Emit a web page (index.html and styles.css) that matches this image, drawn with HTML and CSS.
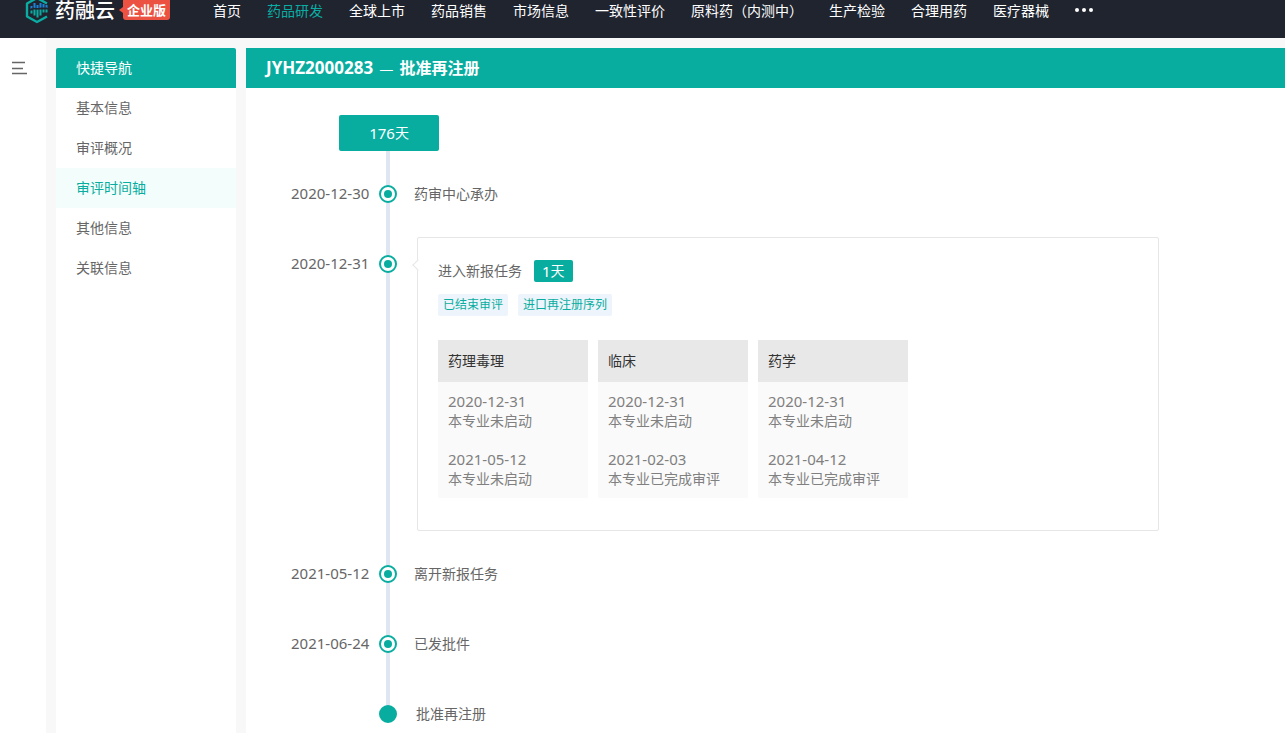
FILE: index.html
```html
<!DOCTYPE html>
<html lang="zh-CN">
<head>
<meta charset="utf-8">
<title>药融云</title>
<link rel="stylesheet" href="styles.css">
</head>
<body>
<header class="topbar">
  <a class="brand" href="#">
    <svg class="brand-mark" viewBox="0 0 24 24" aria-hidden="true">
      <path d="M22 3.500 12 -2 2 3.500V16.500L12 22 22 16.500" fill="none" stroke="#0bada3" stroke-width="2.400" stroke-linejoin="round"/>
      <path d="M6.500 6v3M9.500 3v5M12.500 5v3M15.500 3v5M18.500 4v4M21.500 5v3" stroke="#1c84d8" stroke-width="2"/>
      <path d="M6.500 10.500v3M9.500 9.500v6M12.500 9.500v8M15.500 9.500v6M18.500 9.500v3M21.500 9.500v3" stroke="#0bada3" stroke-width="2"/>
      <path d="M5 9.500 8 8l4 1 4-1h6" fill="none" stroke="#20242f"/>
    </svg>
    <span class="brand-name">药融云</span>
    <span class="brand-badge">企业版</span>
  </a>
  <nav class="main-nav">
    <a href="#">首页</a>
    <a class="active" href="#">药品研发</a>
    <a href="#">全球上市</a>
    <a href="#">药品销售</a>
    <a href="#">市场信息</a>
    <a href="#">一致性评价</a>
    <a href="#">原料药（内测中）</a>
    <a href="#">生产检验</a>
    <a href="#">合理用药</a>
    <a href="#">医疗器械</a>
    <button class="more" type="button" aria-label="更多"><i></i><i></i><i></i></button>
  </nav>
</header>
<div class="shell">
  <div class="rail">
    <button class="menu-toggle" type="button" aria-label="展开菜单">
      <svg viewBox="0 0 16 14" aria-hidden="true"><path d="M0 1.500h13M0 7.500h11M0 12.500h15" stroke="#666" stroke-width="1.300"/></svg>
    </button>
  </div>
  <aside class="side-nav">
    <h2>快捷导航</h2>
    <a href="#">基本信息</a>
    <a href="#">审评概况</a>
    <a class="active" href="#">审评时间轴</a>
    <a href="#">其他信息</a>
    <a href="#">关联信息</a>
  </aside>
  <main class="panel">
    <h1><span class="code">JYHZ2000283</span><span class="dash">—</span>批准再注册</h1>
    <div class="timeline">
      <div class="total"><span class="num">176</span>天</div>
      <ol class="events">
        <li><time>2020-12-30</time><span class="dot"></span><p>药审中心承办</p></li>
        <li>
          <time>2020-12-31</time><span class="dot"></span>
          <section class="card">
            <div class="card-title">进入新报任务 <span class="days"><span class="num">1</span>天</span></div>
            <div class="tags"><span>已结束审评</span><span>进口再注册序列</span></div>
            <div class="subjects">
              <article>
                <h3>药理毒理</h3>
                <div class="steps">
                  <div><time>2020-12-31</time><p>本专业未启动</p></div>
                  <div><time>2021-05-12</time><p>本专业未启动</p></div>
                </div>
              </article>
              <article>
                <h3>临床</h3>
                <div class="steps">
                  <div><time>2020-12-31</time><p>本专业未启动</p></div>
                  <div><time>2021-02-03</time><p>本专业已完成审评</p></div>
                </div>
              </article>
              <article>
                <h3>药学</h3>
                <div class="steps">
                  <div><time>2020-12-31</time><p>本专业未启动</p></div>
                  <div><time>2021-04-12</time><p>本专业已完成审评</p></div>
                </div>
              </article>
            </div>
          </section>
        </li>
        <li><time>2021-05-12</time><span class="dot"></span><p>离开新报任务</p></li>
        <li><time>2021-06-24</time><span class="dot"></span><p>已发批件</p></li>
        <li class="last"><time></time><span class="dot"></span><p>批准再注册</p></li>
      </ol>
    </div>
  </main>
</div>
</body>
</html>
```
FILE: styles.css
```css
* { box-sizing: border-box; }
body, h1, h2, h3, p, ol { margin: 0; padding: 0; }
body {
  display: flex;
  flex-direction: column;
  min-height: 100vh;
  background: #f8f8f8;
  color: #666;
  font: 14px/20px "Noto Sans", "Noto Sans CJK SC", sans-serif;
  overflow: hidden;
}
a { color: inherit; text-decoration: none; }
button { padding: 0; border: 0; background: none; cursor: pointer; }

.topbar {
  display: flex;
  align-items: flex-start;
  height: 38px;
  padding-left: 25px;
  background: #20242f;
  color: #fff;
}
.brand { display: flex; align-items: flex-start; width: 175px; }
.brand-mark { width: 24px; height: 24px; flex: none; }
.brand-name {
  margin-left: 6px;
  font-family: "Noto Sans CJK SC", sans-serif;
  font-size: 20px;
  font-weight: 500;
  line-height: 20px;
  white-space: nowrap;
}
.brand-badge {
  position: relative;
  margin-left: 8px;
  padding: 0 4px;
  border-radius: 0 0 3px 3px;
  background: #ec5242;
  font-size: 13px;
  font-weight: 700;
  line-height: 20px;
  white-space: nowrap;
}
.brand-badge::before {
  content: "";
  position: absolute;
  left: -4px;
  top: 7px;
  border: solid transparent;
  border-width: 3px 4px 3px 0;
  border-right-color: #ec5242;
}
.main-nav { display: flex; line-height: 22px; white-space: nowrap; }
.main-nav a { padding: 0 13px; }
.main-nav .active { color: #0bada3; }
.more { display: flex; align-items: center; gap: 3px; height: 20px; margin-left: 13px; }
.more i { width: 4px; height: 4px; border-radius: 50%; background: #fff; }

.shell { display: flex; flex: 1; }
.rail { width: 46px; background: #fff; }
.menu-toggle { display: block; margin: 23px 0 0 12px; }
.menu-toggle svg { display: block; width: 16px; height: 14px; }
.side-nav { width: 180px; margin: 10px 10px 0; background: #fff; }
.side-nav h2, .side-nav a { display: block; padding-left: 20px; font-size: 14px; line-height: 40px; }
.side-nav h2 { border-radius: 2px 2px 0 0; background: #08ada0; color: #fff; font-weight: 400; }
.side-nav .active { background: #f3fdfb; color: #08ada0; }

.panel { flex: 1; min-width: 0; margin-top: 10px; background: #fff; }
.panel h1 {
  display: flex;
  padding-left: 20px;
  background: #08ada0;
  color: #fff;
  font-size: 16px;
  line-height: 40px;
}
.code { font-size: 17px; }
.dash { padding: 0 6px; font-family: "Noto Sans CJK SC", sans-serif; font-weight: 400; }
.timeline { padding: 27px 126px 0 45px; }
.total {
  display: flex;
  justify-content: center;
  width: 100px;
  height: 36px;
  margin-left: 48px;
  border-radius: 2px;
  background: #08ada0;
  color: #fff;
  line-height: 36px;
}
.num, time { font-size: 15px; }
.events { list-style: none; }
.events li {
  display: grid;
  grid-template-columns: 88px 18px 1fr;
  align-items: start;
  background: linear-gradient(#dde6f2, #dde6f2) 95px 0 / 4px 100% no-repeat;
}
.events li > time { margin-top: 32px; }
.events li > p { margin-top: 33px; padding: 0 0 17px 17px; }
.dot {
  display: grid;
  place-items: center;
  width: 18px;
  height: 18px;
  margin-top: 34px;
  border: 2px solid #08ada0;
  border-radius: 50%;
  background: #fff;
}
.dot::before { content: ""; width: 8px; height: 8px; border-radius: 50%; background: #08ada0; }
.events .last { background-size: 4px 40px; }
.events .last .dot { background: #08ada0; }
.events .last > p { padding-left: 19px; }

.card {
  position: relative;
  margin: 16px 0 0 20px;
  padding: 22px 20px 32px;
  border: 1px solid #e6e6e6;
  border-radius: 2px;
}
.card::before {
  content: "";
  position: absolute;
  left: -4px;
  top: 23px;
  width: 7px;
  height: 7px;
  border: solid #e6e6e6;
  border-width: 0 0 1px 1px;
  background: #fff;
  transform: rotate(45deg);
}
.card-title { display: flex; align-items: center; gap: 12px; }
.days {
  display: flex;
  height: 22px;
  padding: 0 8px;
  border-radius: 2px;
  background: #08ada0;
  color: #fff;
  line-height: 22px;
}
.tags { display: flex; gap: 10px; margin-top: 12px; }
.tags span { padding: 0 5px; border-radius: 2px; background: #edf4fb; color: #08ada0; font-size: 12px; line-height: 22px; }
.subjects { display: flex; gap: 10px; margin-top: 24px; }
.subjects article { width: 150px; background: #fafafa; }
.subjects h3 { padding: 0 10px; background: #e8e8e8; color: #333; font-size: 14px; font-weight: 400; line-height: 42px; }
.steps { display: grid; gap: 20px; padding: 10px; color: #808080; line-height: 19px; }
.steps time { display: block; }
```
